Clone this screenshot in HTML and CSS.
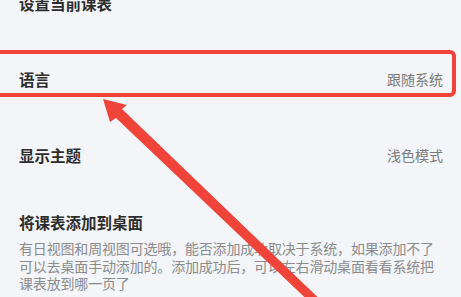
FILE: index.html
```html
<!DOCTYPE html>
<html lang="zh-CN">
<head>
<meta charset="utf-8">
<link rel="stylesheet" href="styles.css">
</head>
<body>
<div class="page">
  <div class="list">
    <div class="row"><span class="label">设置当前课表</span></div>
    <div class="row"><span class="label">语言</span><span class="value">跟随系统</span></div>
    <div class="row"><span class="label">显示主题</span><span class="value">浅色模式</span></div>
    <div class="section">
      <div class="label">将课表添加到桌面</div>
      <p class="desc">有日视图和周视图可选哦，能否添加成功取决于系统，如果添加不了<br>可以去桌面手动添加的。添加成功后，可以左右滑动桌面看看系统把<br>课表放到哪一页了</p>
    </div>
  </div>
  <div class="highlight"></div>
  <svg class="arrow" width="461" height="297" viewBox="0 0 461 297">
    <polygon points="103,99 127,105 122,109 331,310 318,310 116,118 110,122" fill="#f0443a"/>
  </svg>
</div>
</body>
</html>
```

FILE: styles.css
```css
html, body {
  margin: 0;
  padding: 0;
  background: #f3f5f8;
}
body {
  font-family: "Noto Sans CJK SC", "Noto Sans", sans-serif;
  width: 461px;
  height: 297px;
  overflow: hidden;
}
.page {
  position: relative;
  width: 461px;
  height: 297px;
  overflow: hidden;
}
.list {
  margin-top: -35px;
  padding: 0 18px 0 19px;
}
.row {
  height: 76px;
  display: flex;
  align-items: center;
  justify-content: space-between;
}
.label {
  font-size: 15.5px;
  font-weight: 700;
  color: #2d2d2d;
  line-height: 22px;
}
.value {
  font-size: 14px;
  color: #7a7a7a;
  line-height: 20px;
}
.section {
  padding-top: 18px;
}
.desc {
  margin: 7px 0 0;
  font-size: 14px;
  letter-spacing: -0.17px;
  line-height: 17.5px;
  color: #8b8b8b;
}
.highlight {
  position: absolute;
  left: -12px;
  top: 50px;
  width: 460px;
  height: 39px;
  border: 4.5px solid #f0443a;
  border-radius: 6px;
}
.arrow {
  position: absolute;
  left: 0;
  top: 0;
}
```
